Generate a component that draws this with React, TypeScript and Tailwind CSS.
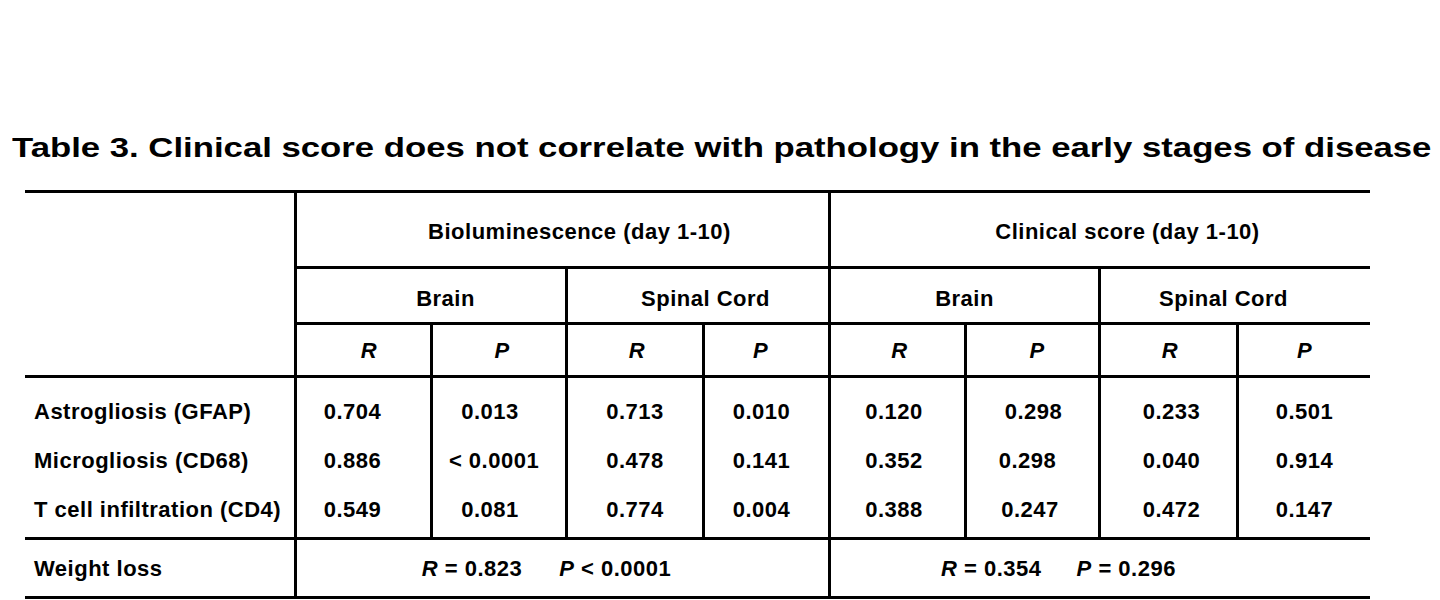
import React from "react";

// Table 3 — correlation of clinical score / bioluminescence with pathology
const rowLabels = ["Astrogliosis (GFAP)", "Microgliosis (CD68)", "T cell infiltration (CD4)"];

const dataCols: { values: string[]; cls: string[] }[] = [
  { values: ["0.704", "0.886", "0.549"], cls: ["pr-[22px]", "pr-[22px]", "pr-[22px]"] },
  { values: ["0.013", "< 0.0001", "0.081"], cls: ["pr-[18px]", "pr-[10px]", "pr-[18px]"] },
  { values: ["0.713", "0.478", "0.774"], cls: ["", "", ""] },
  { values: ["0.010", "0.141", "0.004"], cls: ["pr-[10px]", "pr-[10px]", "pr-[10px]"] },
  { values: ["0.120", "0.352", "0.388"], cls: ["pr-[7px]", "pr-[7px]", "pr-[7px]"] },
  { values: ["0.298", "0.298", "0.247"], cls: ["pl-[2px]", "pr-[10px]", "pr-[5px]"] },
  { values: ["0.233", "0.040", "0.472"], cls: ["pl-[6px]", "pl-[6px]", "pl-[6px]"] },
  { values: ["0.501", "0.914", "0.147"], cls: ["", "", ""] },
];

const rpHeaders = [
  { t: "R", cls: "pl-[11px]" },
  { t: "P", cls: "pl-[6px]" },
  { t: "R", cls: "pl-[4px]" },
  { t: "P", cls: "pr-[12px]" },
  { t: "R", cls: "pl-[4px]" },
  { t: "P", cls: "pl-[9px]" },
  { t: "R", cls: "pl-[3px]" },
  { t: "P", cls: "" },
];

const cell = "flex items-center justify-center border-black";

export default function App() {
  return (
    <div className="min-h-screen w-full overflow-hidden bg-white text-black font-['Liberation_Sans',Arial,Helvetica,sans-serif] font-bold pt-[134px]">
      {/* Title */}
      <div className="pl-[12px] h-[28px] leading-[28px] mb-[28px] text-[28px] whitespace-nowrap">
        <span className="inline-block origin-left scale-x-[1.24]">
          Table 3. Clinical score does not correlate with pathology in the early stages of disease
        </span>
      </div>

      {/* Table */}
      <div className="ml-[25px] w-[1345px] border-y-[3px] border-black grid grid-cols-[269px_136px_135px_137px_126px_136px_134px_138px_134px] grid-rows-[76px_56px_53px_162px_56px] text-[22px] tracking-[0.5px]">
        {/* empty corner */}
        <div className="row-span-3 border-b-[3px] border-black" />

        {/* group headers */}
        <div className={`${cell} col-span-4 border-l-[3px] border-b-[3px] pl-[34px] pt-[4px]`}>
          Bioluminescence (day 1-10)
        </div>
        <div className={`${cell} col-span-4 border-l-[3px] border-b-[3px] pl-[54px] pt-[4px]`}>
          Clinical score (day 1-10)
        </div>

        {/* tissue headers */}
        <div className={`${cell} col-span-2 border-l-[3px] border-b-[3px] pl-[29px] pt-[6px]`}>Brain</div>
        <div className={`${cell} col-span-2 border-l-[3px] border-b-[3px] pl-[15px] pt-[6px]`}>Spinal Cord</div>
        <div className={`${cell} col-span-2 border-l-[3px] border-b-[3px] pt-[6px]`}>Brain</div>
        <div className={`${cell} col-span-2 border-l-[3px] border-b-[3px] pr-[24px] pt-[6px]`}>Spinal Cord</div>

        {/* R / P headers */}
        {rpHeaders.map((h, i) => (
          <div key={i} className={`${cell} border-l-[3px] border-b-[3px] italic ${h.cls}`}>
            {h.t}
          </div>
        ))}

        {/* data rows */}
        <div className="flex flex-col border-b-[3px] border-black pt-[9px] pl-[9px]">
          {rowLabels.map((l) => (
            <div key={l} className="h-[49px] flex items-center whitespace-nowrap">
              {l}
            </div>
          ))}
        </div>
        {dataCols.map((c, i) => (
          <div key={i} className="flex flex-col border-l-[3px] border-b-[3px] border-black pt-[9px]">
            {c.values.map((v, j) => (
              <div key={j} className={`h-[49px] flex items-center justify-center whitespace-nowrap ${c.cls[j]}`}>
                {v}
              </div>
            ))}
          </div>
        ))}

        {/* weight loss */}
        <div className="flex items-center pl-[9px] pt-[1px]">Weight loss</div>
        <div className={`${cell} col-span-4 border-l-[3px] gap-[37px] pr-[32px] pt-[1px]`}>
          <span className="whitespace-nowrap">
            <i>R</i> = 0.823
          </span>
          <span className="whitespace-nowrap">
            <i>P</i> &lt; 0.0001
          </span>
        </div>
        <div className={`${cell} col-span-4 border-l-[3px] gap-[35px] pr-[84px] pt-[1px]`}>
          <span className="whitespace-nowrap">
            <i>R</i> = 0.354
          </span>
          <span className="whitespace-nowrap">
            <i>P</i> = 0.296
          </span>
        </div>
      </div>
    </div>
  );
}
